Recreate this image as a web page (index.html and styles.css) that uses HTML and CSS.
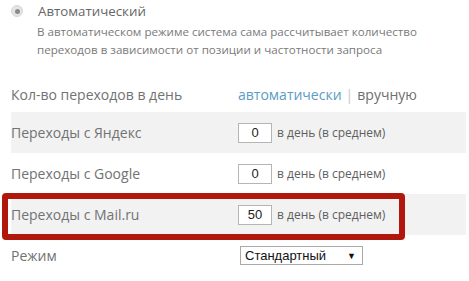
FILE: index.html
```html
<!DOCTYPE html>
<html lang="ru">
<head>
  <meta charset="UTF-8">
  <title>Переходы</title>
  <link rel="stylesheet" href="styles.css">
</head>
<body>
  <div class="auto">
    <label class="auto-title">
      <span class="radio"><span class="radio-dot"></span></span>
      Автоматический
    </label>
    <p class="auto-desc">В автоматическом режиме система сама рассчитывает количество<br>переходов в зависимости от позиции и частотности запроса</p>
  </div>

  <div class="rows">
    <div class="row row-head">
      <div class="cell-label">Кол-во переходов в день</div>
      <div class="cell-value">
        <a class="mode-link">автоматически</a>
        <span class="sep">|</span>
        <span class="mode-plain">вручную</span>
      </div>
    </div>
    <div class="row shaded">
      <div class="cell-label">Переходы с Яндекс</div>
      <div class="cell-value">
        <input class="num" type="text" value="0">
        <span class="unit">в день (в среднем)</span>
      </div>
    </div>
    <div class="row">
      <div class="cell-label">Переходы с Google</div>
      <div class="cell-value">
        <input class="num" type="text" value="0">
        <span class="unit">в день (в среднем)</span>
      </div>
    </div>
    <div class="row shaded marked">
      <div class="cell-label">Переходы с Mail.ru</div>
      <div class="cell-value">
        <input class="num" type="text" value="50">
        <span class="unit">в день (в среднем)</span>
      </div>
      <div class="highlight"></div>
    </div>
    <div class="row">
      <div class="cell-label">Режим</div>
      <div class="cell-value">
        <div class="select">
          <span>Стандартный</span>
          <span class="arrow">▼</span>
        </div>
      </div>
    </div>
  </div>
</body>
</html>
```

FILE: styles.css
```css
body {
  margin: 0;
  font-family: "Open Sans", "DejaVu Sans", sans-serif;
  color: #6e6e6e;
  background: #fff;
}

.auto {
  padding: 1px 0 0 11px;
  height: 71px;
  box-sizing: border-box;
}

.auto-title {
  display: flex;
  align-items: center;
  font-size: 13.3px;
  color: #666;
  height: 20px;
}

.radio {
  width: 12px;
  height: 12px;
  border-radius: 50%;
  background: #e4e4e4;
  border: 1px solid #d6d6d6;
  box-sizing: border-box;
  display: flex;
  align-items: center;
  justify-content: center;
  margin: 0 15px 0 0;
}

.radio-dot {
  width: 5px;
  height: 5px;
  border-radius: 50%;
  background: #8a8a8a;
}

.auto-desc {
  margin: 2px 0 0 26px;
  font-size: 11.6px;
  line-height: 18px;
  color: #7a7a7a;
}

.rows {
  margin-left: 11px;
  width: 455px;
}

.row {
  display: flex;
  align-items: center;
  height: 41px;
  font-size: 14px;
  position: relative;
}

.row-head {
  padding-top: 6px;
  box-sizing: border-box;
}

.shaded {
  background: #f2f2f2;
}

.cell-label {
  width: 227px;
  color: #727272;
}

.cell-value {
  display: flex;
  align-items: center;
}

.mode-link {
  color: #5b9cc4;
}

.sep {
  color: #c8c8c8;
  margin: 0 4px;
}

.mode-plain {
  color: #6e6e6e;
}

.num {
  width: 34px;
  height: 20px;
  box-sizing: border-box;
  border: 1px solid #b5b5b5;
  background: #fff;
  font-family: "Liberation Sans", Arial, sans-serif;
  font-size: 13px;
  color: #222;
  text-align: center;
  padding: 0;
  margin: 0;
}

.unit {
  font-size: 12px;
  color: #5e5e5e;
  margin-left: 5px;
}

.select {
  margin-left: 2px;
  width: 123px;
  height: 19px;
  box-sizing: border-box;
  border: 1px solid #a9a9a9;
  background: #fff;
  display: flex;
  align-items: center;
  justify-content: space-between;
  padding: 0 6px 0 4px;
  font-family: "Liberation Sans", Arial, sans-serif;
  font-size: 13px;
  color: #111;
}

.arrow {
  font-size: 9px;
}

.highlight {
  position: absolute;
  left: -9px;
  top: -1px;
  width: 403px;
  height: 47px;
  box-sizing: border-box;
  border: 6px solid #b1180d;
  border-radius: 4px;
}
```
